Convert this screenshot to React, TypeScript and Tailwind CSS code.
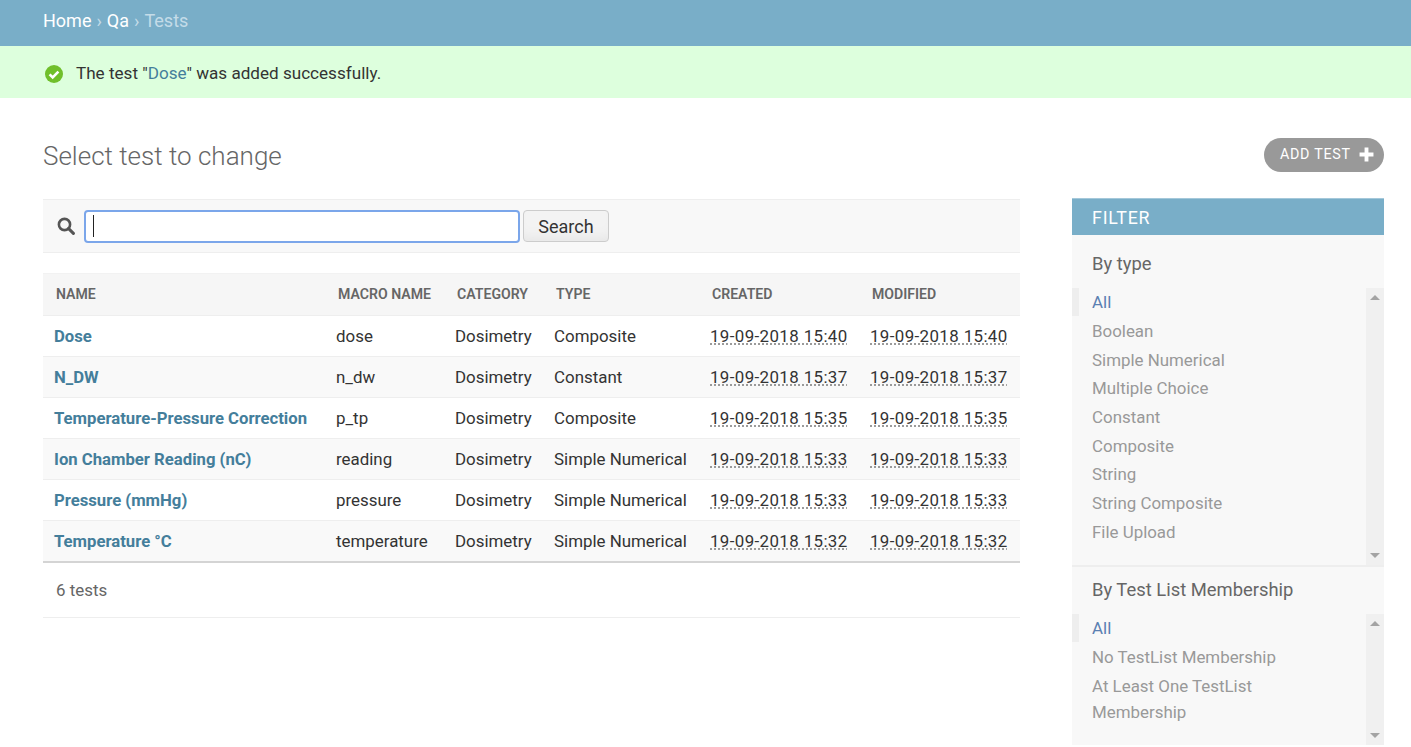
import React from 'react'

const rows = [
  { name: 'Dose', macro: 'dose', type: 'Composite', date: '19-09-2018 15:40' },
  { name: 'N_DW', macro: 'n_dw', type: 'Constant', date: '19-09-2018 15:37' },
  { name: 'Temperature-Pressure Correction', macro: 'p_tp', type: 'Composite', date: '19-09-2018 15:35' },
  { name: 'Ion Chamber Reading (nC)', macro: 'reading', type: 'Simple Numerical', date: '19-09-2018 15:33' },
  { name: 'Pressure (mmHg)', macro: 'pressure', type: 'Simple Numerical', date: '19-09-2018 15:33' },
  { name: 'Temperature °C', macro: 'temperature', type: 'Simple Numerical', date: '19-09-2018 15:32' },
]

const headers = [
  { label: 'Name', width: 'w-[282px]' },
  { label: 'Macro name', width: 'w-[119px]' },
  { label: 'Category', width: 'w-[99px]' },
  { label: 'Type', width: 'w-[156px]' },
  { label: 'Created', width: 'w-[160px]' },
  { label: 'Modified', width: 'w-[161px]' },
]

function DateCell({ value }: { value: string }) {
  return (
    <td className="pl-[11px] pt-px whitespace-nowrap">
      <span className="tracking-[0.38px] underline decoration-dotted decoration-[#8a8a8a] underline-offset-[2px]">{value}</span>
    </td>
  )
}

function FilterList({ items, height }: { items: string[]; height: string }) {
  return (
    <div className={`flex ${height}`}>
      <div className="w-[7px] shrink-0">
        <div className="h-[28px] bg-[#eeeeee]" />
      </div>
      <ul className="flex-1 pl-[13px] pr-[30px] text-[16.9px]">
        {items.map((item, i) => (
          <li key={item} className={`py-[1.33px] leading-[26px] ${i === 0 ? 'text-[#5b80b2]' : 'text-[#999999]'}`}>
            {item}
          </li>
        ))}
      </ul>
      <div className="w-[18px] shrink-0 bg-[#f0f0f0] flex flex-col items-center justify-between py-[7px]">
        <div className="w-0 h-0 border-x-[5px] border-x-transparent border-b-[5px] border-b-[#a3a3a3]" />
        <div className="w-0 h-0 border-x-[5px] border-x-transparent border-t-[5px] border-t-[#a3a3a3]" />
      </div>
    </div>
  )
}

export default function App() {
  return (
    <div className="h-[747px] overflow-hidden bg-white text-[#333333] font-['Roboto',sans-serif]">
      <div className="h-[46px] bg-[#79aec8] pl-[43px] flex items-center pb-[6px] text-[18px] text-white">
        <a>Home</a>
        <span className="mx-[5px] text-[#c4dce8]">›</span>
        <a>Qa</a>
        <span className="mx-[5px] text-[#c4dce8]">›</span>
        <span className="text-[#c4dce8]">Tests</span>
      </div>

      <div className="h-[52px] bg-[#ddffdd] pl-[45px] flex items-center pt-[3px] text-[17.1px] text-[#333333]">
        <svg width="18" height="18" viewBox="0 0 18 18" className="mr-[13px] shrink-0">
          <circle cx="9" cy="9" r="9" fill="#70bf2b" />
          <path d="M4.6 9.3 7.7 12.4 13.4 6.6" fill="none" stroke="#ffffff" strokeWidth="2.6" />
        </svg>
        <span>
          The test "<a className="text-[#447e9b]">Dose</a>" was added successfully.
        </span>
      </div>

      <div className="pl-[43px] pr-[27px]">
        <div className="flex items-start justify-between h-[100px] pt-[39px]">
          <h1 className="text-[26px] leading-[36px] pt-px font-light text-[#666666]">Select test to change</h1>
          <a className="mt-[1px] h-[34px] w-[120px] rounded-full bg-[#999999] text-white flex items-center pl-[16px] text-[14.3px] tracking-[0.7px]">
            <span className="pb-px">ADD TEST</span>
            <svg width="15" height="15" viewBox="0 0 14 14" className="ml-[8px] mb-[2px]">
              <path d="M5.2 0.5h3.6v4.7h4.7v3.6H8.8v4.7H5.2V8.8H0.5V5.2h4.7z" fill="#ffffff" />
            </svg>
          </a>
        </div>

        <div className="flex items-start gap-[52px]">
          <div className="w-[977px] shrink-0 pt-[1px]">
            <div className="h-[54px] bg-[#f8f8f8] border-y border-[#eeeeee] flex items-center pl-[14px]">
              <svg width="18" height="18" viewBox="0 0 18 18" className="mr-[10px] shrink-0">
                <circle cx="7.5" cy="7.5" r="5.6" fill="none" stroke="#555555" strokeWidth="2.6" />
                <path d="M11.6 11.6 16.4 16.4" stroke="#555555" strokeWidth="3" strokeLinecap="round" />
              </svg>
              <div className="-ml-px w-[436px] h-[33px] rounded-[4px] border-2 border-[#7ba6ea] bg-white flex items-center pl-[7px]">
                <div className="w-px h-[22px] bg-[#222222]" />
              </div>
              <button className="ml-[3px] w-[86px] h-[32px] rounded-[4px] border border-[#cccccc] bg-[#f3f3f3] pt-px text-[18px] text-[#333333] shadow-[inset_0_-12px_12px_-8px_#e6e6e6]">
                Search
              </button>
            </div>

            <table className="w-[977px] mt-[20px] table-fixed border-collapse">
              <thead>
                <tr className="h-[42px] bg-[#f6f6f6] border-t border-[#f2f2f2] border-b border-b-[#eeeeee]">
                  {headers.map(h => (
                    <th
                      key={h.label}
                      className={`${h.width} pl-[13px] text-left text-[14.1px] font-semibold uppercase text-[#666666]`}
                    >
                      {h.label}
                    </th>
                  ))}
                </tr>
              </thead>
              <tbody className="text-[16.9px]">
                {rows.map((row, i) => (
                  <tr key={row.name} className={`h-[41px] border-b border-[#eeeeee] ${i % 2 === 1 ? 'bg-[#f9f9f9]' : 'bg-white'}`}>
                    <td className="pl-[11px] pt-px text-[16.7px] font-bold text-[#447e9b] whitespace-nowrap">{row.name}</td>
                    <td className="pl-[11px] pt-px">{row.macro}</td>
                    <td className="pl-[11px] pt-px">Dosimetry</td>
                    <td className="pl-[11px] pt-px whitespace-nowrap">{row.type}</td>
                    <DateCell value={row.date} />
                    <DateCell value={row.date} />
                  </tr>
                ))}
              </tbody>
            </table>

            <div className="-mt-px h-[56px] border-t-2 border-[#d4d4d4] flex items-center pl-[13px] pt-[2px] text-[16.9px] text-[#666666]">
              6 tests
            </div>
            <div className="border-t border-[#eeeeee]" />
          </div>

          <div className="w-[312px] shrink-0 bg-[#f8f8f8]">
            <div className="h-[37px] bg-[#79aec8] border-t border-[#a4c8da] pl-[20px] flex items-center pt-[3px] text-[17.8px] tracking-[0.8px] text-white">
              FILTER
            </div>
            <h3 className="pl-[20px] pt-[16px] pb-[12px] text-[18.4px] leading-[25px] text-[#666666]">By type</h3>
            <FilterList
              height="h-[277px]"
              items={['All', 'Boolean', 'Simple Numerical', 'Multiple Choice', 'Constant', 'Composite', 'String', 'String Composite', 'File Upload']}
            />
            <div className="border-t-2 border-[#eeeeee]" />
            <h3 className="pl-[20px] pt-[10px] pb-[12px] text-[18.4px] leading-[25px] text-[#666666]">By Test List Membership</h3>
            <FilterList
              height="h-[131px]"
              items={['All', 'No TestList Membership', 'At Least One TestList Membership']}
            />
          </div>
        </div>
      </div>
    </div>
  )
}
